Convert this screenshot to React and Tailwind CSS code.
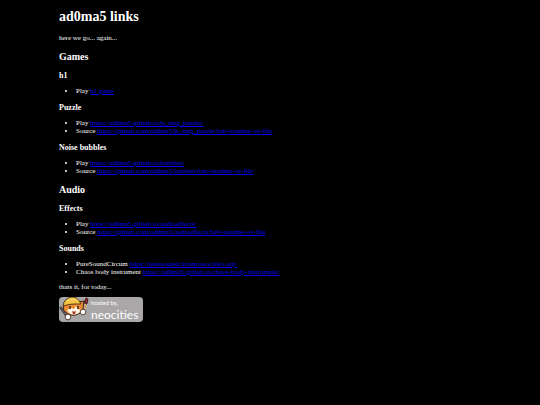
import React from 'react';

const sections = [
  {
    title: 'Games',
    groups: [
      {
        title: 'h1',
        items: [{ label: 'Play', text: 'h1 game', url: '#h1' }],
      },
      {
        title: 'Puzzle',
        items: [
          { label: 'Play', url: 'https://ad0ma5.github.io/js_img_puzzle/' },
          { label: 'Source', url: 'https://github.com/ad0ma5/js_img_puzzle?tab=readme-ov-file' },
        ],
      },
      {
        title: 'Noise bubbles',
        items: [
          { label: 'Play', url: 'https://ad0ma5.github.io/bubbles/' },
          { label: 'Source', url: 'https://github.com/ad0ma5/bubbles?tab=readme-ov-file' },
        ],
      },
    ],
  },
  {
    title: 'Audio',
    groups: [
      {
        title: 'Effects',
        items: [
          { label: 'Play', url: 'https://ad0ma5.github.io/audioeffects/' },
          { label: 'Source', url: 'https://github.com/ad0ma5/audioeffects?tab=readme-ov-file' },
        ],
      },
      {
        title: 'Sounds',
        items: [
          { label: 'PureSoundCircum', url: 'https://puresoundcircum.neocities.org/' },
          { label: 'Chaos body instrument', url: 'https://ad0ma5.github.io/chaos-body-instrument/' },
        ],
      },
    ],
  },
];

function LinkGroup({ title, items }) {
  return (
    <section>
      <h3 className="mt-2 mb-1.5 text-[8px] leading-[10px] font-bold">{title}</h3>
      <ul className="list-disc pl-[17px]">
        {items.map((item) => (
          <li key={item.url}>
            {item.label}{' '}
            <a href={item.url} className="text-[#0000ee] underline">
              {item.text || item.url}
            </a>
          </li>
        ))}
      </ul>
    </section>
  );
}

function NeocitiesCat() {
  return (
    <svg viewBox="0 0 30 25" className="h-[25px] w-[30px]" aria-hidden="true">
      {/* wrench */}
      <path d="M1 10l3 4 2-3M4 14l6 9" stroke="#2b2b2e" strokeWidth="2.2" fill="none" />
      <path d="M1 10l3 4 2-3M4 14l6 9" stroke="#8f9096" strokeWidth="0.7" fill="none" />
      {/* head */}
      <path d="M7 7l-3 3 1 4 4 3q6 3 12-1l3-4 1-8-5 1z" fill="#e98a35" stroke="#3a2013" strokeWidth="1" />
      <path d="M8 13l4-2 3 1 2-3 2 3 3 1-2 3q-6 3-10 0z" fill="#fff3e2" />
      {/* cap */}
      <path d="M4 9q1-8 9-9 6 0 9 7l-7 0q-5 0-11 2z" fill="#f5c445" stroke="#4a2b12" strokeWidth="0.9" />
      <path d="M8 4q4-3 10-1" stroke="#fbe388" strokeWidth="1" fill="none" />
      {/* face */}
      <path d="M11 9v3M19 9v3" stroke="#1c1210" strokeWidth="1.3" />
      <path d="M13 14q2 1 4 0l-1 3h-2z" fill="#a3312b" />
      {/* paws */}
      <circle cx="9" cy="20" r="2.8" fill="#fff" stroke="#3a2013" strokeWidth="0.8" />
      <circle cx="24" cy="15" r="2.8" fill="#fff" stroke="#3a2013" strokeWidth="0.8" />
      {/* brush */}
      <path d="M26 12l1-6" stroke="#d8a868" strokeWidth="1.6" />
      <path d="M25 6l2-5 2 1-1 5z" fill="#8d1f30" stroke="#2c1216" strokeWidth="0.7" />
    </svg>
  );
}

export default function App() {
  return (
    <main className="min-h-screen bg-black px-[59px] pt-[9px] pb-4 font-['Liberation_Serif',serif] text-[7px] leading-[8px] text-white">
      <h1 className="text-[14px] leading-[16px] font-bold">ad0ma5 links</h1>
      <p className="mt-[9px]">here we go... again...</p>
      {sections.map((section) => (
        <section key={section.title}>
          <h2 className="mt-2 text-[10px] leading-[13px] font-bold">{section.title}</h2>
          {section.groups.map((group) => (
            <LinkGroup key={group.title} {...group} />
          ))}
        </section>
      ))}
      <p className="mt-[7px] mb-1.5">thats it, for today...</p>
      <a
        href="https://neocities.org/"
        className="flex w-[84px] gap-0.5 rounded-[4px] bg-[#a9a7a8] font-['Lato',sans-serif]"
      >
        <NeocitiesCat />
        <span className="flex flex-col pt-0.5">
          <span className="text-[6px] leading-[8px]">hosted by,</span>
          <span className="text-[12px] leading-[15px]">neocities</span>
        </span>
      </a>
    </main>
  );
}
